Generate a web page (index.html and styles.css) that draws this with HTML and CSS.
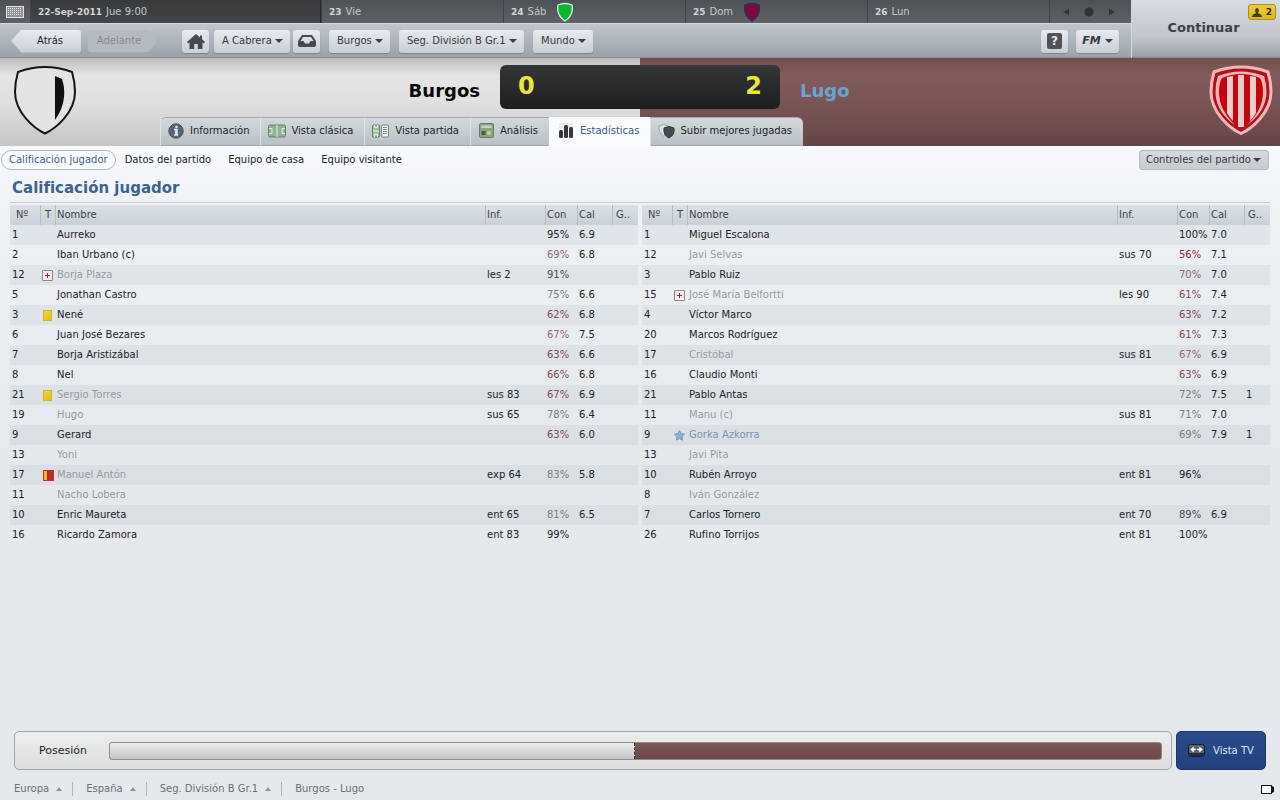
FILE: index.html
```
<!DOCTYPE html>
<html lang="es">
  <head>
    <meta charset="UTF-8" />
    <title>Burgos - Lugo</title>
    <link rel="stylesheet" href="styles.css">
  </head>
  <body>
    <header class="topbar">
      <div class="calendar">
        <button class="cal-btn" aria-label="Calendario">
          <svg width="18" height="12" viewBox="0 0 18 12"><rect x="0.5" y="0.5" width="17" height="11" fill="#8e9296" stroke="#e4e6e8"/><path d="M2 2.500h14M2 4.500h14M2 6.500h14M2 8.500h14" stroke="#e9ebed" stroke-dasharray="1 1"/></svg>
        </button>
        <div class="day today"><b>22-Sep-2011</b> Jue 9:00</div>
        <div class="day"><b>23</b> Vie</div>
        <div class="day"><b>24</b> Sáb
          <svg class="mini-crest" width="18" height="20" viewBox="0 0 18 20"><path d="M2 3Q9 0 16 3Q18 13 9 19Q0 13 2 3Z" fill="#0cb52b" stroke="#e6f5e6" stroke-width="1.3"/></svg>
        </div>
        <div class="day"><b>25</b> Dom
          <svg class="mini-crest" width="18" height="20" viewBox="0 0 18 20"><path d="M2 3Q9 0 16 3Q18 13 9 19Q0 13 2 3Z" fill="#7c0743" stroke="#35265c" stroke-width="1.3"/></svg>
        </div>
        <div class="day"><b>26</b> Lun</div>
        <div class="day-nav">
          <button aria-label="Anterior"><svg width="6" height="6" viewBox="0 0 6 6"><path d="M6 0v6L0 3z" fill="#303336"/></svg></button>
          <button aria-label="Hoy"><svg width="10" height="10" viewBox="0 0 10 10"><circle cx="5" cy="5" r="4.5" fill="#303336"/></svg></button>
          <button aria-label="Siguiente"><svg width="6" height="6" viewBox="0 0 6 6"><path d="M0 0v6l6-3z" fill="#303336"/></svg></button>
        </div>
      </div>

      <nav class="toolbar">
        <button class="btn back">Atrás</button>
        <button class="btn forward" disabled>Adelante</button>
        <button class="btn icon-btn home" aria-label="Inicio">
          <svg width="18" height="15" viewBox="0 0 18 15"><path d="M9 0L0 8l1.2 1.5L2.5 8.6V15h4.7v-5h3.6v5h4.7V8.600l1.3.9L18 8l-3-2.700V1.500h-2v2z" fill="#46494d"/></svg>
        </button>
        <div class="drop"><select aria-label="Entrenador"><option>A Cabrera</option></select></div>
        <button class="btn icon-btn" aria-label="Bandeja de entrada">
          <svg width="18" height="12" viewBox="0 0 18 12"><path fill-rule="evenodd" d="M4 0h10l4 6v4q0 2-2 2H2q-2 0-2-2V6zM5 2L2.500 6h3l1.500 2.500h4L12.500 6h3L13 2z" fill="#46494d"/></svg>
        </button>
        <div class="drop club"><select aria-label="Club"><option>Burgos</option></select></div>
        <div class="drop club"><select aria-label="Competición"><option>Seg. División B Gr.1</option></select></div>
        <div class="drop club"><select aria-label="Mundo"><option>Mundo</option></select></div>
        <button class="btn icon-btn help" aria-label="Ayuda"><span>?</span></button>
        <button class="btn fm"><i>FM</i><span class="arrow"></span></button>
      </nav>

      <button class="continue">Continuar
        <span class="alert"><svg width="10" height="9" viewBox="0 0 10 9"><path d="M5 0a2 2.500 0 0 1 1.300 4.300V5.500Q10 6 10 9H0Q0 6 3.700 5.500V4.300A2 2.500 0 0 1 5 0z" fill="#453b0c"/></svg>2</span>
      </button>
    </header>

    <section class="match">
      <svg class="crest" width="64" height="72" viewBox="0 0 64 72">
        <path d="M5 8Q32-2 59 8Q62 18 62 28C62 49 42 65 32 69.500C22 65 2 49 2 28Q2 18 5 8Z" fill="#e4e4e4" stroke="#141414" stroke-width="2"/>
        <path d="M42 12l7 3q3 9 2 18q-1 12-9 23z" fill="#111"/>
      </svg>
      <div class="match-main">
        <div class="score-row">
          <h2 class="home-team">Burgos</h2>
          <div class="scoreboard"><span>0</span><span>2</span></div>
          <h2 class="away-team">Lugo</h2>
        </div>
        <nav class="tabs">
          <a href="#">
            <svg width="17" height="16" viewBox="0 0 17 16"><circle cx="8" cy="8" r="7.200" fill="#566678" stroke="#435161"/><circle cx="8.500" cy="4" r="1.300" fill="#e4eaef"/><path d="M6 6.500h3v5h1.200M6 12h4M7.800 7v5" stroke="#e4eaef" stroke-width="1.400" fill="none"/></svg>
            Información</a>
          <a href="#">
            <svg width="18" height="14" viewBox="0 0 18 14"><rect x="0.500" y="1" width="17" height="12" rx="1.500" fill="#8db394" stroke="#628268"/><path d="M9 1v12M1 4.500h3v5H1M17 4.500h-3v5h3" fill="none" stroke="#e4efe5"/></svg>
            Vista clásica</a>
          <a href="#">
            <svg width="18" height="14" viewBox="0 0 18 14"><rect x="0.500" y="1" width="7" height="12" rx="1" fill="#a2c3a7" stroke="#628268"/><path d="M1 7h6M2.500 1v2.500h3V1M2.500 13v-2.500h3V13" fill="none" stroke="#e8f2e8"/><rect x="9.500" y="1" width="7" height="12" rx="1" fill="#edf0f1" stroke="#7a8287"/><path d="M11 3.500h4M11 5.500h4M11 7.500h4M11 9.500h4" stroke="#8b9297"/></svg>
            Vista partida</a>
          <a href="#">
            <svg width="17" height="15" viewBox="0 0 17 15"><rect x="1.500" y="0.500" width="14" height="14" rx="1.500" fill="#8aa584" stroke="#66796b"/><path d="M3.500 5V2.500h10V5z" fill="#c7d3c3"/><rect x="3.500" y="8" width="4" height="4" fill="#455a4a"/><circle cx="11" cy="10" r="2" fill="#dbd46a"/></svg>
            Análisis</a>
          <a href="#" class="active">
            <svg width="18" height="16" viewBox="0 0 18 16"><path d="M2 1h14M2 4h14" stroke="#d5d7d9"/><rect x="2" y="7" width="4" height="8" rx="1.500" fill="#34373b"/><rect x="7" y="2" width="4" height="13" rx="1.500" fill="#34373b"/><rect x="12" y="4" width="4" height="11" rx="1.500" fill="#34373b"/></svg>
            Estadísticas</a>
          <a href="#">
            <svg width="17" height="16" viewBox="0 0 17 16"><path d="M1 3q5-3 9 0q1 7-4.500 10Q0 9 1 3z" fill="#dfe3e5" stroke="#9a9fa3"/><path d="M6 5q5-3 10 0q1 7-5 10Q5 12 6 5z" fill="#484c50" stroke="#303336"/></svg>
            Subir mejores jugadas</a>
        </nav>
      </div>
      <svg class="crest" width="64" height="72" viewBox="0 0 64 72">
        <path d="M5 8Q32-2 59 8Q62 18 62 28C62 49 42 65 32 69.500C22 65 2 49 2 28Q2 18 5 8Z" fill="#a71620" stroke="#f9b5b5" stroke-width="3"/>
        <path d="M8 11Q32 2 56 11Q58.500 19 58.500 28C58.500 47 41 61 32 65C23 61 5.500 47 5.500 28Q5.500 19 8 11Z" fill="#c4060c" stroke="#a71620"/>
        <path d="M9 12Q32 3 55 12Q57.500 19 57.500 28C57.500 44 46 56 38 61Q54 46 54 28Q54 19 51 14Q32 6 13 14Q10 19 10 28Q10 46 26 61C18 56 6.500 44 6.500 28Q6.500 19 9 12Z" fill="#f5b4b4"/>
        <path d="M18 13l6-1v45q-3-3-6-8zM29 11h6v52h-6zM41 12l6 1v36q-3 5-6 8z" fill="#edcccc"/>
      </svg>
    </section>

    <main class="content">
      <div class="subnav">
        <nav>
          <a href="#" class="active">Calificación jugador</a>
          <a href="#">Datos del partido</a>
          <a href="#">Equipo de casa</a>
          <a href="#">Equipo visitante</a>
        </nav>
        <div class="drop controls"><select aria-label="Controles del partido"><option>Controles del partido</option></select></div>
      </div>

      <h1>Calificación jugador</h1>

      <div class="ratings">
        <table>
          <thead>
            <tr><th class="num">Nº</th><th class="t">T</th><th>Nombre</th><th class="inf">Inf.</th><th class="con">Con</th><th class="cal">Cal</th><th class="goals">G..</th></tr>
          </thead>
          <tbody>
            <tr><td>1</td><td></td><td>Aurreko</td><td></td><td>95%</td><td>6.9</td><td></td></tr>
            <tr><td>2</td><td></td><td>Iban Urbano (c)</td><td></td><td class="tired">69%</td><td>6.8</td><td></td></tr>
            <tr><td>12</td><td><span class="injury"></span></td><td class="off">Borja Plaza</td><td>les 2</td><td class="good">91%</td><td></td><td></td></tr>
            <tr><td>5</td><td></td><td>Jonathan Castro</td><td></td><td class="mid">75%</td><td>6.6</td><td></td></tr>
            <tr><td>3</td><td><span class="card"></span></td><td>Nené</td><td></td><td class="low">62%</td><td>6.8</td><td></td></tr>
            <tr><td>6</td><td></td><td>Juan José Bezares</td><td></td><td class="tired">67%</td><td>7.5</td><td></td></tr>
            <tr><td>7</td><td></td><td>Borja Aristizábal</td><td></td><td class="low">63%</td><td>6.6</td><td></td></tr>
            <tr><td>8</td><td></td><td>Nel</td><td></td><td class="low">66%</td><td>6.8</td><td></td></tr>
            <tr><td>21</td><td><span class="card"></span></td><td class="off">Sergio Torres</td><td>sus 83</td><td class="low">67%</td><td>6.9</td><td></td></tr>
            <tr><td>19</td><td></td><td class="off">Hugo</td><td>sus 65</td><td class="mid">78%</td><td>6.4</td><td></td></tr>
            <tr><td>9</td><td></td><td>Gerard</td><td></td><td class="low">63%</td><td>6.0</td><td></td></tr>
            <tr><td>13</td><td></td><td class="off">Yoni</td><td></td><td></td><td></td><td></td></tr>
            <tr><td>17</td><td><span class="card red"></span></td><td class="off">Manuel Antón</td><td>exp 64</td><td class="mid">83%</td><td>5.8</td><td></td></tr>
            <tr><td>11</td><td></td><td class="off">Nacho Lobera</td><td></td><td></td><td></td><td></td></tr>
            <tr><td>10</td><td></td><td>Enric Maureta</td><td>ent 65</td><td class="mid">81%</td><td>6.5</td><td></td></tr>
            <tr><td>16</td><td></td><td>Ricardo Zamora</td><td>ent 83</td><td>99%</td><td></td><td></td></tr>
          </tbody>
        </table>

        <table>
          <thead>
            <tr><th class="num">Nº</th><th class="t">T</th><th>Nombre</th><th class="inf">Inf.</th><th class="con">Con</th><th class="cal">Cal</th><th class="goals">G..</th></tr>
          </thead>
          <tbody>
            <tr><td>1</td><td></td><td>Miguel Escalona</td><td></td><td>100%</td><td>7.0</td><td></td></tr>
            <tr><td>12</td><td></td><td class="off">Javi Selvas</td><td>sus 70</td><td class="bad">56%</td><td>7.1</td><td></td></tr>
            <tr><td>3</td><td></td><td>Pablo Ruiz</td><td></td><td class="tired">70%</td><td>7.0</td><td></td></tr>
            <tr><td>15</td><td><span class="injury"></span></td><td class="off">José María Belfortti</td><td>les 90</td><td class="low">61%</td><td>7.4</td><td></td></tr>
            <tr><td>4</td><td></td><td>Víctor Marco</td><td></td><td class="low">63%</td><td>7.2</td><td></td></tr>
            <tr><td>20</td><td></td><td>Marcos Rodríguez</td><td></td><td class="low">61%</td><td>7.3</td><td></td></tr>
            <tr><td>17</td><td></td><td class="off">Cristóbal</td><td>sus 81</td><td class="tired">67%</td><td>6.9</td><td></td></tr>
            <tr><td>16</td><td></td><td>Claudio Monti</td><td></td><td class="low">63%</td><td>6.9</td><td></td></tr>
            <tr><td>21</td><td></td><td>Pablo Antas</td><td></td><td class="mid">72%</td><td>7.5</td><td>1</td></tr>
            <tr><td>11</td><td></td><td class="off">Manu (c)</td><td>sus 81</td><td class="mid">71%</td><td>7.0</td><td></td></tr>
            <tr><td>9</td><td><svg class="star" width="11" height="11" viewBox="0 0 11 11"><path d="M5.500 0.500l1.500 3.300 3.500.4-2.600 2.400.7 3.600-3.100-1.800-3.100 1.800.7-3.600L0.500 4.200 4 3.800z" fill="#8fb4dc" stroke="#6f94bf"/></svg></td><td class="best">Gorka Azkorra</td><td></td><td class="mid">69%</td><td>7.9</td><td>1</td></tr>
            <tr><td>13</td><td></td><td class="off">Javi Pita</td><td></td><td></td><td></td><td></td></tr>
            <tr><td>10</td><td></td><td>Rubén Arroyo</td><td>ent 81</td><td>96%</td><td></td><td></td></tr>
            <tr><td>8</td><td></td><td class="off">Iván González</td><td></td><td></td><td></td><td></td></tr>
            <tr><td>7</td><td></td><td>Carlos Tornero</td><td>ent 70</td><td class="good">89%</td><td>6.9</td><td></td></tr>
            <tr><td>26</td><td></td><td>Rufino Torrijos</td><td>ent 81</td><td>100%</td><td></td><td></td></tr>
          </tbody>
        </table>
      </div>
    </main>

    <section class="bottom">
      <div class="possession">
        <span>Posesión</span>
        <div class="bar"><div class="bar-home" style="width: 50%"></div></div>
      </div>
      <button class="tv">
        <svg width="17" height="13" viewBox="0 0 17 13"><rect x="0.500" y="0.500" width="16" height="12" rx="2" fill="#5b626a" stroke="#15202f"/><path d="M1 9h15v2q0 1-1 1H2q-1 0-1-1z" fill="#222c38"/><path d="M2.500 5.500l3-2.500v2h2v1h-2v2zM14.500 5.500l-3-2.500v2h-2v1h2v2z" fill="#fff" stroke="#fff" stroke-width="0.500"/></svg>
        Vista TV
      </button>
    </section>

    <footer>
      <nav class="crumbs">
        <a href="#">Europa <i></i></a>
        <a href="#">España <i></i></a>
        <a href="#">Seg. División B Gr.1 <i></i></a>
        <a href="#">Burgos - Lugo</a>
      </nav>
      <svg width="13" height="9" viewBox="0 0 13 9"><rect x="0.500" y="0.500" width="10" height="8" fill="#fff" stroke="#111"/><path d="M11 1v7l2-1V2z" fill="#111"/></svg>
    </footer>
  </body>
</html>
```
FILE: styles.css
```
* {
  box-sizing: border-box;
}

body {
  margin: 0;
  min-height: 100vh;
  display: flex;
  flex-direction: column;
  background: #e5e9ec;
  color: #202326;
  font: 10px/14px "DejaVu Sans", sans-serif;
}

button,
select {
  font: inherit;
  color: inherit;
  border: none;
  background: none;
  padding: 0;
  margin: 0;
}

a {
  color: inherit;
  text-decoration: none;
}

h1,
h2 {
  margin: 0;
}

svg {
  flex: none;
}

/* top bar */
.topbar {
  display: grid;
  grid-template-columns: 1fr 149px;
  grid-template-rows: 23px 35px;
}

.calendar {
  display: grid;
  grid-template-columns: 30px 291px repeat(4, 1fr) 82px;
  background: linear-gradient(#4e5256, #5e6266);
  color: #c5c8cb;
}

.cal-btn,
.day,
.day-nav {
  display: flex;
  align-items: center;
}

.cal-btn {
  justify-content: center;
}

.day {
  gap: 4px;
  padding-left: 7px;
  border-left: 1px solid #404347;
}

.day.today {
  background: linear-gradient(#37393b, #434648);
  border-right: 1px solid #28292b;
}

.day b {
  font-size: 9px;
  color: #d2d4d6;
}

.mini-crest {
  margin-left: 6px;
}

.day-nav {
  justify-content: center;
  gap: 15px;
  padding-right: 4px;
  border-left: 1px solid #404347;
}

.day-nav button {
  display: flex;
}

.toolbar {
  display: flex;
  align-items: center;
  padding: 1px 12px 0 11px;
  background: linear-gradient(#c1c6cd, #9ba2ab);
  border-top: 1px solid #d3d7db;
  border-bottom: 1px solid #858b92;
}

.btn,
.drop {
  height: 23px;
  border-radius: 3px;
  color: #34383c;
  background: linear-gradient(#e8ebef, #c8ced5);
  box-shadow: 0 1px 1px #7d848b;
}

.back,
.forward {
  width: 70px;
}

.back {
  padding-left: 8px;
  color: #1e2124;
  clip-path: polygon(0 50%, 15% 0, 100% 0, 100% 100%, 15% 100%);
}

.forward {
  margin-left: 7px;
  padding-right: 8px;
  color: #858a91;
  background: #b5bac1;
  clip-path: polygon(0 0, 85% 0, 100% 50%, 85% 100%, 0 100%);
}

.icon-btn {
  width: 27px;
  display: flex;
  align-items: center;
  justify-content: center;
  margin-left: 3px;
}

.home {
  margin-left: 24px;
  margin-right: 5px;
}

/* select and its arrow share one cell */
.drop {
  display: grid;
  align-items: center;
}

.drop select,
.drop::after {
  grid-area: 1 / 1;
}

.drop select {
  appearance: none;
  height: 22px;
  padding: 0 18px 0 8px;
}

.drop::after,
.arrow {
  content: "";
  border: 4px solid transparent;
  border-top-color: #3b3f43;
  border-bottom: none;
}

.drop::after {
  justify-self: end;
  margin-right: 7px;
  pointer-events: none;
}

.club {
  margin-left: 9px;
}

.help {
  margin-left: auto;
}

.help span {
  width: 15px;
  height: 16px;
  border-radius: 2px;
  background: #505458;
  color: #e6e9ec;
  font-size: 12px;
  font-weight: bold;
  line-height: 16px;
}

.fm {
  margin-left: 8px;
  width: 43px;
  display: flex;
  align-items: center;
  justify-content: center;
  gap: 4px;
}

.fm i {
  font-size: 11px;
  font-weight: bold;
}

.continue {
  grid-area: 1 / 2 / 3 / 3;
  position: relative;
  padding-right: 5px;
  padding-bottom: 1px;
  font-size: 13px;
  font-weight: bold;
  color: #3c4045;
  background: linear-gradient(#d9dce1, #c2c6cd 65%, #9ba1a9);
  border-left: 1px solid #d5d8dc;
  border-bottom: 1px solid #858b92;
}

.alert {
  position: absolute;
  top: 4px;
  right: 4px;
  width: 28px;
  height: 16px;
  display: flex;
  align-items: center;
  justify-content: center;
  gap: 4px;
  font-size: 9px;
  color: #332b08;
  background: linear-gradient(#edce34, #dcb91d);
  border: 1px solid #ad8f1c;
  border-radius: 3px;
}

/* match header */
.match {
  display: grid;
  grid-template-columns: 160px 1fr 160px;
  height: 88px;
  background:
    linear-gradient(#bdbdbd, #e5e5e5 20%, #e0e0e0 50%, #c5c5c5) left / 50% 100% no-repeat,
    linear-gradient(#75504f, #825b5b 20%, #7a5555 50%, #664547) right / 50% 100% no-repeat;
}

.crest {
  margin: 6px 7px 0 13px;
}

.crest:last-child {
  justify-self: end;
}

.match-main {
  display: flex;
  flex-direction: column;
  justify-content: space-between;
  padding-top: 7px;
}

.score-row {
  display: grid;
  grid-template-columns: 1fr 280px 1fr;
  align-items: center;
  gap: 20px;
}

.score-row h2 {
  font-size: 18px;
  line-height: 24px;
  padding-top: 8px;
}

.home-team {
  text-align: right;
  color: #0a0a0a;
}

.away-team {
  color: #69a5d2;
}

.scoreboard {
  display: flex;
  justify-content: space-between;
  height: 44px;
  padding: 0 18px;
  border-radius: 6px;
  background: linear-gradient(#343638, #1d1e1f);
  color: #e8e83a;
  font-size: 24px;
  font-weight: bold;
  line-height: 42px;
}

.tabs {
  display: flex;
}

.tabs a {
  height: 29px;
  display: flex;
  align-items: center;
  gap: 5px;
  padding: 0 11px 2px 7px;
  background: linear-gradient(#d2d9dc, #b9c1c6);
  border: 1px solid #a2aaaf;
  border-left-color: #dce1e4;
  border-right-width: 0;
}

.tabs a:first-child {
  border-radius: 6px 0 0 0;
}

.tabs a:last-child {
  border-radius: 0 6px 0 0;
}

.tabs a.active {
  color: #395a89;
  background: #fafbfd;
  border-color: #fafbfd;
}

/* content */
.content {
  flex: 1;
  background: linear-gradient(#f8fafd, #edf1f4 80px, #e5e9ec 300px);
}

.subnav {
  display: flex;
  justify-content: space-between;
  align-items: center;
  height: 28px;
  padding: 0 11px 0 1px;
}

.subnav nav {
  display: flex;
  gap: 1px;
}

.subnav a {
  padding: 2px 7px;
  border: 1px solid transparent;
  border-radius: 10px;
}

.subnav a.active {
  color: #3d628c;
  background: #f9fbfd;
  border-color: #abb5bb;
}

.controls {
  height: 20px;
  background: linear-gradient(#d5dadd, #c5cbcf);
  border: 1px solid #b4babe;
  box-shadow: none;
}

.controls select {
  height: 18px;
  padding: 0 17px 0 6px;
}

h1 {
  margin: 0 10px;
  padding: 4px 2px;
  color: #3d628c;
  font-size: 15px;
  line-height: 20px;
  border-bottom: 1px solid #c4cacf;
}

.ratings {
  display: grid;
  grid-template-columns: 1fr 1fr;
  gap: 4px;
  padding: 2px 10px 0;
}

table {
  width: 100%;
  table-layout: fixed;
  border-collapse: separate;
  border-spacing: 0;
}

th,
td {
  height: 20px;
  padding: 0 0 0 2px;
  text-align: left;
  white-space: nowrap;
}

th {
  padding-left: 1px;
  font-weight: normal;
  color: #3e4347;
  background: linear-gradient(#dce1e6, #c9d0d9);
  border-left: 1px solid #b5bdc5;
}

th.num {
  width: 30px;
  padding-left: 6px;
  border-left: none;
}

th.t {
  width: 15px;
  padding-left: 4px;
}

th.inf {
  width: 60px;
}

th.con {
  width: 32px;
}

th.cal {
  width: 35px;
}

th.goals {
  width: 26px;
  padding-left: 3px;
}

tbody tr:nth-child(odd) {
  background: rgba(40, 70, 80, 0.06);
}

td:nth-child(2) {
  padding: 0;
}

.off {
  color: #969b9f;
}

.best {
  color: #7796b8;
}

.good {
  color: #484c50;
}

.mid {
  color: #7b7b80;
}

.tired {
  color: #896b72;
}

.low {
  color: #884952;
}

.bad {
  color: #8d2638;
}

.card,
.injury,
.star {
  display: block;
  margin-left: 2px;
}

.card {
  width: 9px;
  height: 11px;
  margin-left: 3px;
  background: linear-gradient(135deg, #f5d932, #dfba13);
  border: 1px solid #cdb03a;
}

.card.red {
  width: 11px;
  background: linear-gradient(90deg, #eeb52d 3px, #bd2924 3px);
  border-color: #a54031;
}

.injury {
  width: 11px;
  height: 11px;
  border: 1px solid #8d8589;
  border-radius: 1px;
  background:
    linear-gradient(#a51c37, #a51c37) center / 5px 1px no-repeat,
    linear-gradient(#a51c37, #a51c37) center / 1px 5px no-repeat,
    #f7eef0;
}

/* possession */
.bottom {
  display: flex;
  gap: 4px;
  padding: 0 14px;
}

.possession {
  flex: 1;
  height: 39px;
  display: flex;
  align-items: center;
  gap: 22px;
  padding: 0 9px 0 24px;
  font-size: 11px;
  border: 1px solid #a0a7ab;
  border-radius: 5px;
  background: linear-gradient(#edeeee, #dcdddd);
}

.bar {
  flex: 1;
  height: 18px;
  border: 1px solid #8c8c8c;
  border-radius: 3px;
  overflow: hidden;
  background: linear-gradient(#805656, #6b4747);
}

.bar-home {
  height: 100%;
  background: linear-gradient(#ececec, #c6c6c6);
  border-right: 1px dashed #333;
}

.tv {
  width: 90px;
  display: flex;
  align-items: center;
  justify-content: center;
  gap: 8px;
  color: #dfe7f3;
  border: 1px solid #1b3769;
  border-radius: 5px;
  background: linear-gradient(#2a4c8c, #21427f);
}

footer {
  display: flex;
  align-items: center;
  justify-content: space-between;
  height: 30px;
  padding: 8px 6px 0 14px;
  color: #696f74;
}

.crumbs {
  display: flex;
}

.crumbs a {
  display: flex;
  align-items: center;
  gap: 7px;
}

.crumbs a + a {
  margin-left: 10px;
  padding-left: 13px;
  border-left: 1px solid #b0b6ba;
}

.crumbs i {
  border: 3px solid transparent;
  border-bottom: 4px solid #8b9094;
  border-top: none;
}
```
